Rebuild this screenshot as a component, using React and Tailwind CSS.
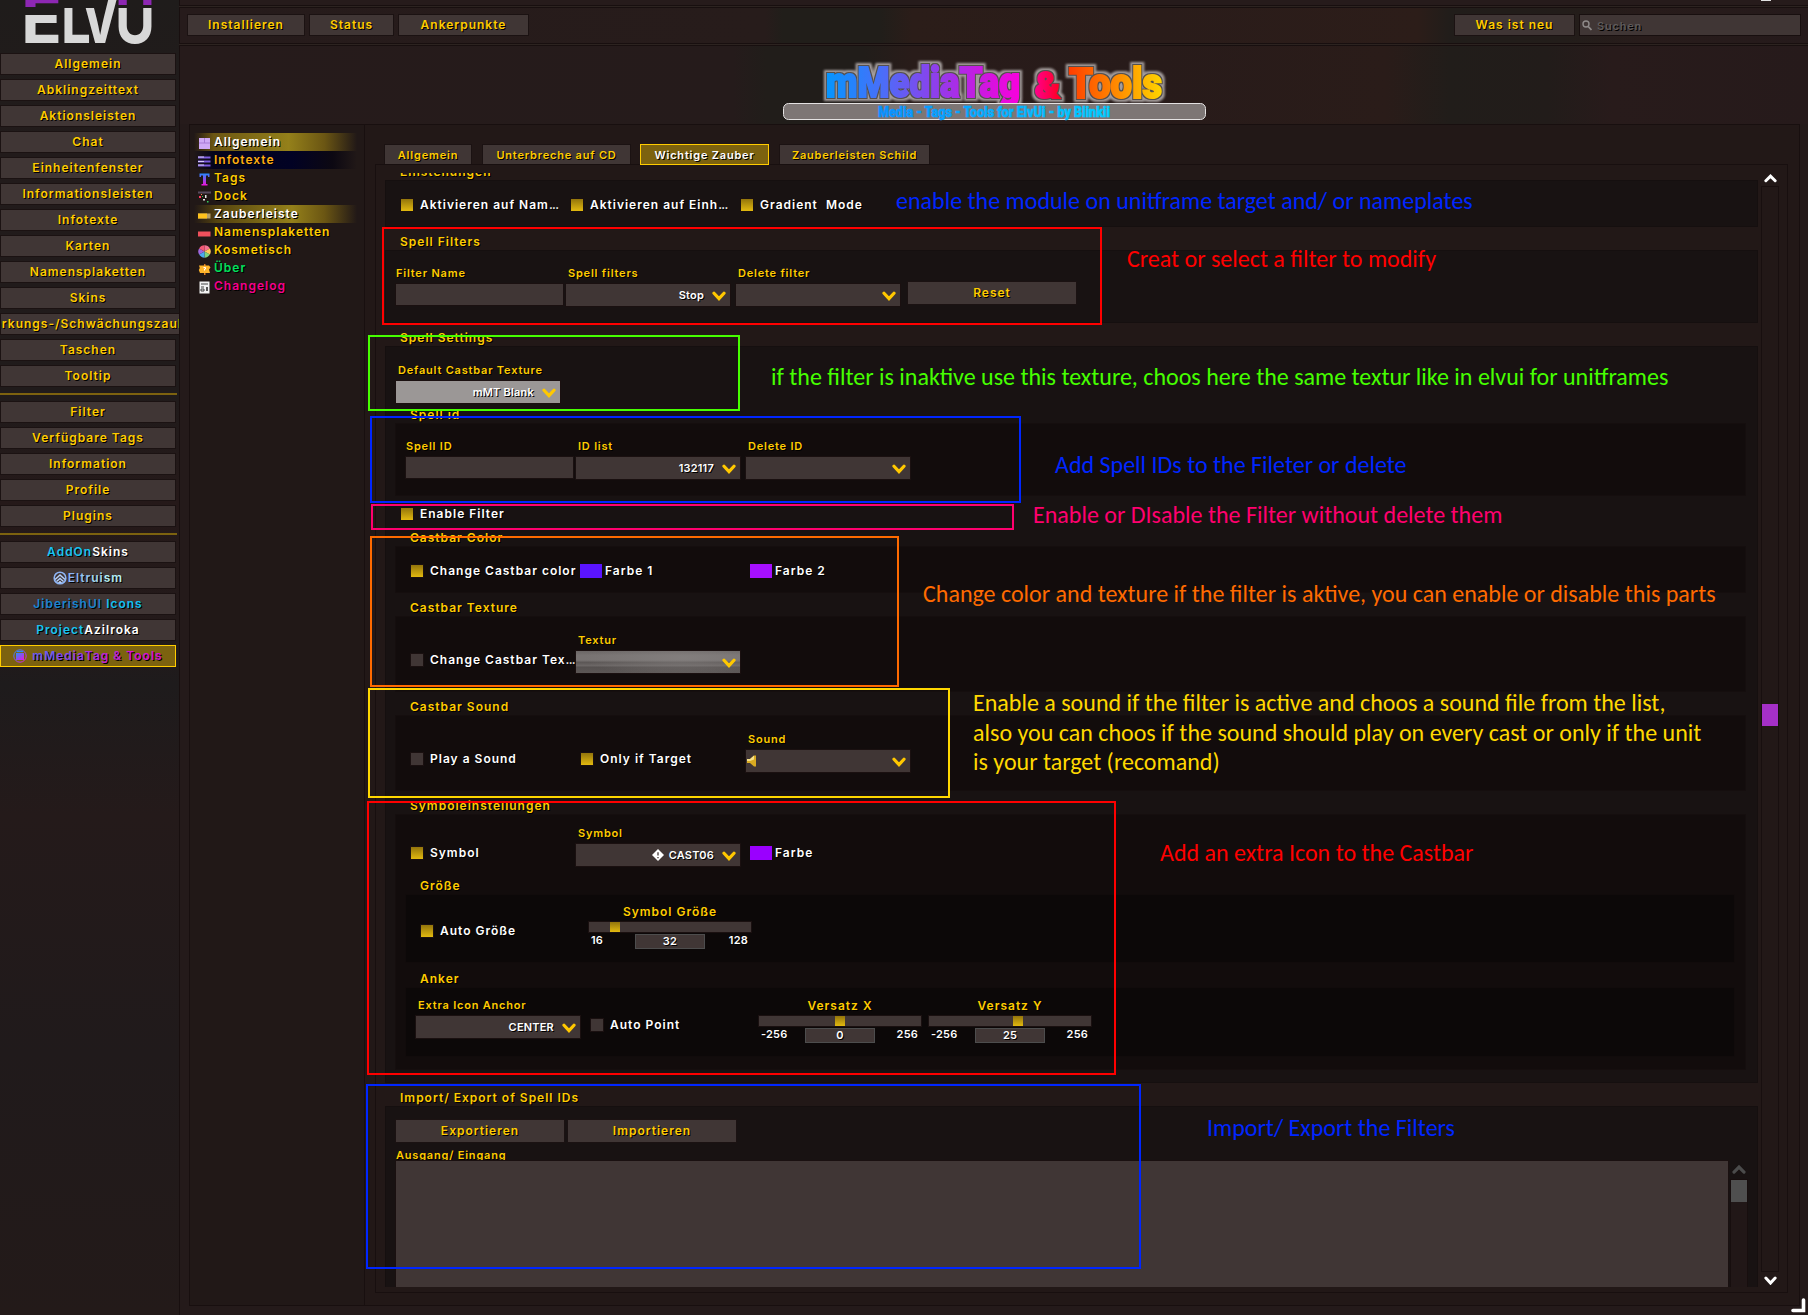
import React from "react";

const UI = "font-['Inter',sans-serif] font-semibold text-[12px] leading-[14px] tracking-[1px] [text-shadow:1px_1px_0_#000] whitespace-pre";
const UI_SMALL = "font-['Inter',sans-serif] font-semibold text-[11px] leading-[14px] tracking-[0.8px] [text-shadow:1px_1px_0_#000] whitespace-pre";
const UI_VALUE = "font-['Inter',sans-serif] font-semibold text-[11px] leading-[14px] tracking-[0.2px] [text-shadow:1px_1px_0_#000] whitespace-pre";

function Chevron({ up, className = "", w = 14 }) {
  return (
    <svg width={w} height={w * 0.72} viewBox="0 0 14 10" fill="none" stroke="currentColor" strokeWidth="3.2" strokeLinecap="round" className={className}>
      {up ? <path d="M2 8 7 3l5 5" /> : <path d="M2 2.2 7 7.6l5-5.4" />}
    </svg>
  );
}

function Button({ children, className = "", text = UI }) {
  return (
    <div className={`${text} flex shrink-0 items-center justify-center overflow-hidden border border-[#1b1212] bg-[#403635] text-[#ffcc00] ${className}`}>
      {children}
    </div>
  );
}

function Separator() {
  return <div className="mt-[2px] mb-[2px] h-[2px] w-[177px] shrink-0 bg-[#7c620f]" />;
}

const mainNav = ["Allgemein", "Abklingzeittext", "Aktionsleisten", "Chat", "Einheitenfenster", "Informationsleisten", "Infotexte", "Karten", "Namensplaketten", "Skins", "Stärkungs-/Schwächungszauber", "Taschen", "Tooltip"];
const toolNav = ["Filter", "Verfügbare Tags", "Information", "Profile", "Plugins"];

function Logo() {
  return (
    <svg width="179" height="53" viewBox="0 0 179 53" className="shrink-0" fontFamily="Inter, sans-serif" fontWeight="700" fontSize="66">
      <defs>
        <linearGradient id="lg" gradientUnits="userSpaceOnUse" x1="0" y1="0" x2="0" y2="50">
          <stop offset="0" stopColor="#8d27b3" /><stop offset="0.09" stopColor="#8d27b3" />
          <stop offset="0.09" stopColor="#8d27b3" stopOpacity="0" /><stop offset="0.16" stopColor="#d8d8d8" stopOpacity="0" />
          <stop offset="0.16" stopColor="#d8d8d8" /><stop offset="1" stopColor="#d8d8d8" />
        </linearGradient>
        <linearGradient id="le" gradientUnits="userSpaceOnUse" x1="0" y1="0" x2="0" y2="50">
          <stop offset="0" stopColor="#8d27b3" /><stop offset="0.14" stopColor="#8d27b3" />
          <stop offset="0.14" stopColor="#8d27b3" stopOpacity="0" /><stop offset="0.3" stopColor="#d8d8d8" stopOpacity="0" />
          <stop offset="0.3" stopColor="#d8d8d8" /><stop offset="1" stopColor="#d8d8d8" />
        </linearGradient>
        <clipPath id="cl"><rect x="0" y="8" width="99" height="45" /><rect x="99" y="0" width="30" height="53" /></clipPath>
      </defs>
      <text x="21" y="43" textLength="41" lengthAdjust="spacingAndGlyphs" fill="url(#le)">E</text>
      <g clipPath="url(#cl)" fill="#d8d8d8">
        <text x="61" y="43" textLength="30" lengthAdjust="spacingAndGlyphs">L</text>
        <text x="81" y="43" textLength="38" lengthAdjust="spacingAndGlyphs">V</text>
      </g>
      <text x="115" y="43" textLength="40" lengthAdjust="spacingAndGlyphs" fill="url(#lg)">U</text>
    </svg>
  );
}

function Sidebar() {
  return (
    <aside className="flex w-[179px] shrink-0 flex-col overflow-hidden bg-[linear-gradient(180deg,#1f1c1b_0%,#221b1b_12%,#201b1b_30%,#251919_38%,#231a1a_48%,#1e1b1c_52%,#241a1a_62%,#201a1b_80%,#231a19_100%)]">
      <Logo />
      <nav className="flex flex-col gap-1">
        {mainNav.map((n, i) => (
          <Button key={n} className={i === 10 ? "h-[22px] w-[179px] border-r-0" : "h-[22px] w-[176px]"}>{n}</Button>
        ))}
        <Separator />
        {toolNav.map((n) => <Button key={n} className="h-[22px] w-[176px]">{n}</Button>)}
        <Separator />
        <Button className="h-[22px] w-[176px]"><span className="text-[#16c3f2]">AddOn</span><span className="text-white">Skins</span></Button>
        <Button className="h-[22px] w-[176px]">
          <svg width="14" height="14" viewBox="0 0 14 14" className="mr-[1px]" fill="none">
            <circle cx="7" cy="7" r="5.8" stroke="#8db4f4" strokeWidth="1.6" />
            <path d="M2 8.5 7 4l5 4.500M3.500 10.500 7 7.500l3.500 3M5.500 12 7 10.700 8.500 12" stroke="#b5d0fa" strokeWidth="1.500" />
          </svg>
          <span className="text-[#8bb4f5]">El</span><span className="text-[#95c6f5]">tr</span><span className="text-[#a5dcf5]">ui</span><span className="text-[#b4eef5]">sm</span>
        </Button>
        <Button className="h-[22px] w-[176px]"><span className="text-[#1784d1]">JiberishUI</span><span className="text-[#10c0f5]"> Icons</span></Button>
        <Button className="h-[22px] w-[176px]"><span className="text-[#16c3f2]">Project</span><span className="text-white">Azilroka</span></Button>
        <div className={`${UI} flex h-[22px] w-[176px] items-center justify-center border border-[#ffcc00] bg-[#7c620f]`}>
          <svg width="14" height="14" viewBox="0 0 14 14" className="mr-[5px]">
            <defs><linearGradient id="mi" x1="0" y1="0" x2="1" y2="1"><stop offset="0" stopColor="#2b8cff" /><stop offset="1" stopColor="#e815e0" /></linearGradient></defs>
            <circle cx="7" cy="7" r="6.2" fill="none" stroke="url(#mi)" />
            <path d="M3 4h8v7H3z" fill="url(#mi)" /><path d="M4 2.500h6" stroke="#2b8cff" strokeWidth="1.300" />
          </svg>
          <span className="text-[#6a5af0]">mM</span><span className="text-[#8048ee]">ed</span><span className="text-[#943ee8]">ia</span><span className="text-[#ac2fe0]">Ta</span><span className="text-[#c024d8]">g &amp;</span><span className="text-[#d412d4]"> Tools</span>
        </div>
      </nav>
    </aside>
  );
}

function Banner() {
  return (
    <svg width="440" height="78" viewBox="775 46 440 78" className="ml-[595px] block" fontFamily="Roboto, sans-serif" fontWeight="900">
      <defs>
        <linearGradient id="b1" gradientUnits="userSpaceOnUse" x1="826" y1="0" x2="1021" y2="0">
          <stop offset="0" stopColor="#0496ff" /><stop offset="0.3" stopColor="#4d6cf8" /><stop offset="0.6" stopColor="#9838ea" /><stop offset="0.8" stopColor="#cc18e0" /><stop offset="1" stopColor="#fa00dc" />
        </linearGradient>
        <linearGradient id="b2" gradientUnits="userSpaceOnUse" x1="1034" y1="0" x2="1060" y2="0"><stop offset="0" stopColor="#ff0090" /><stop offset="1" stopColor="#ff0020" /></linearGradient>
        <linearGradient id="b3" gradientUnits="userSpaceOnUse" x1="1068" y1="0" x2="1162" y2="0"><stop offset="0" stopColor="#ff3c00" /><stop offset="0.5" stopColor="#ff8800" /><stop offset="1" stopColor="#ffd400" /></linearGradient>
        <linearGradient id="b4" gradientUnits="userSpaceOnUse" x1="878" y1="0" x2="1110" y2="0"><stop offset="0" stopColor="#0a90ff" /><stop offset="1" stopColor="#00ccff" /></linearGradient>
        <filter id="glow" x="-5%" y="-30%" width="110%" height="160%" colorInterpolationFilters="sRGB">
          <feMorphology in="SourceAlpha" operator="dilate" radius="3" result="wide" />
          <feGaussianBlur in="wide" stdDeviation="1.2" result="soft" />
          <feFlood floodColor="#a39c9b" result="halo" />
          <feComposite in="halo" in2="soft" operator="in" result="haloed" />
          <feMorphology in="SourceAlpha" operator="dilate" radius="0.8" result="edge" />
          <feFlood floodColor="#55504f" result="dark" />
          <feComposite in="dark" in2="edge" operator="in" result="edged" />
          <feMerge><feMergeNode in="haloed" /><feMergeNode in="edged" /><feMergeNode in="SourceGraphic" /></feMerge>
        </filter>
      </defs>
      <g fontSize="43" strokeWidth="2" strokeLinejoin="miter" filter="url(#glow)">
        <text x="826" y="97" textLength="194" lengthAdjust="spacingAndGlyphs" fill="url(#b1)" stroke="url(#b1)">mMediaTag</text>
        <text x="1035" y="98" textLength="25" lengthAdjust="spacingAndGlyphs" fontSize="36" fill="url(#b2)" stroke="url(#b2)">&amp;</text>
        <text x="1069" y="98" textLength="93" lengthAdjust="spacingAndGlyphs" fill="url(#b3)" stroke="url(#b3)">Tools</text>
      </g>
      <rect x="783.500" y="103.500" width="422" height="16" rx="5" fill="#7d7675" stroke="#e4e2e2" />
      <text x="878" y="116.500" fontSize="15" textLength="232" lengthAdjust="spacingAndGlyphs" fill="url(#b4)" stroke="url(#b4)" strokeWidth="0.600">Media - Tags - Tools for ElvUi - by Blinkii</text>
    </svg>
  );
}

function TreeIcon({ kind }) {
  const box = "mr-[3px] mt-[4px] h-[13px] w-[13px] shrink-0";
  switch (kind) {
    case "grid":
      return <svg className={box} viewBox="0 0 13 13"><path d="M1 1h11v11H1z" fill="#cfa9f6" /><path d="M1 6h11M6.500 1v5" stroke="#a77ad6" /></svg>;
    case "lines":
      return <svg className={box} viewBox="0 0 13 13"><path d="M0 2.500h12.500M0 6.500h12.500M0 10.500h12.500" stroke="#7d5ce0" strokeWidth="2" /><path d="M0 2h6M0 6.500h6M0 10h6" stroke="#d9cdfa" /></svg>;
    case "tag":
      return <svg className={box} viewBox="0 0 13 13"><defs><linearGradient id="tg" x1="0" y1="0" x2="0" y2="1"><stop offset="0" stopColor="#2588ff" /><stop offset="1" stopColor="#f012d8" /></linearGradient></defs><path d="M1.500.5h10v3.500H10V2.500H8V11h1.500v1.500h-6V11H5V2.500H3V4H1.500z" fill="url(#tg)" /></svg>;
    case "dock":
      return <svg className={box} viewBox="0 0 13 13"><path d="M0 .5h13v2H0z" fill="#574a5e" /><path d="M1 5h2v2H1z" fill="#ff3a60" /><path d="M3 3h1v1H3z" fill="#ff8844" /><path d="M7 4h1.500v3H7zM5 8h2v1.500H5z" fill="#e8e8e8" /><path d="M9 10h1.500v1.500H9zM4 5h1v1H4z" fill="#35d15b" /></svg>;
    case "cast":
      return <svg className={box} viewBox="0 0 13 13"><path d="M0 4.500h12.500v5H0z" fill="#b49f6a" /><path d="M0 4.500h9v5H0z" fill="#ffc21c" /></svg>;
    case "plate":
      return <svg className={box} viewBox="0 0 13 13"><path d="M0 4.500h12.500v5H0z" fill="#f0505c" /></svg>;
    case "wheel":
      return (
        <svg className={box} viewBox="-6.500 -6.500 13 13">
          <path d="M0 0V-6.200A6.200 6.200 0 0 1 5.400-3.100Z" fill="#f2728f" /><path d="M0 0 5.400-3.100A6.200 6.200 0 0 1 5.400 3.100Z" fill="#ffc95c" />
          <path d="M0 0 5.400 3.100A6.200 6.200 0 0 1 0 6.200Z" fill="#7ed37c" /><path d="M0 0V6.200A6.200 6.200 0 0 1-5.400 3.100Z" fill="#4aa8f0" />
          <path d="M0 0-5.400 3.100A6.200 6.200 0 0 1-5.400-3.100Z" fill="#a067dd" /><path d="M0 0-5.400-3.100A6.200 6.200 0 0 1 0-6.200Z" fill="#f05a76" />
        </svg>
      );
    case "sign":
      return <svg className={box} viewBox="0 0 13 13"><path d="M6 1h1.500v11H6z" fill="#e07b22" /><path d="M1 2.500h10l1.500 2-1.500 2L12 10H2L.8 7l1-2z" fill="#ffb52b" /><path d="M5.500 4.500h2v1.500h-1v1.500" stroke="#fff" fill="none" /></svg>;
    default:
      return <svg className={box} viewBox="0 0 13 13"><path d="M1.500.5h10v12h-10z" fill="#f2f2f2" /><path d="M3 3h7M3 6h3M3 8h3v2H3z" stroke="#444" fill="none" /><path d="M8 6h2v4H8z" fill="#555" /></svg>;
  }
}

const tree = [
  ["grid", "Allgemein", "text-white bg-[linear-gradient(90deg,transparent,#6b5613_12%,#94801a_58%,#6b5613_80%,transparent)]"],
  ["lines", "Infotexte", "text-[#ffae12] bg-[linear-gradient(90deg,transparent,#03031c_12%,#020224_60%,#0c0812_85%,transparent)]"],
  ["tag", "Tags", "text-[#ffcc00]"],
  ["dock", "Dock", "text-[#ffcc00]"],
  ["cast", "Zauberleiste", "text-white bg-[linear-gradient(90deg,transparent,#55430f_14%,#94801a_60%,#6b5613_80%,transparent)]"],
  ["plate", "Namensplaketten", "text-[#ffcc00]"],
  ["wheel", "Kosmetisch", "text-[#ffcc00]"],
  ["sign", "Über", "text-[#00e05c]"],
  ["log", "Changelog", "text-[#f5008c]"],
];

function Heading({ children, className = "" }) {
  return <div className={`${UI} h-[23px] shrink-0 pt-[8px] pl-[15px] text-[#ffcc00] ${className}`}>{children}</div>;
}

function Label({ children, className = "" }) {
  return <div className={`${UI_SMALL} text-[#ffcc00] ${className}`}>{children}</div>;
}

function Cell({ children, className = "" }) {
  return <div className={`w-[170px] shrink-0 ${className}`}>{children}</div>;
}

function Check({ on, cut, children, className = "" }) {
  return (
    <Cell className={className}>
      <div className="flex h-[14px] items-center pl-[4px]">
        <span className={on ? "h-[14px] w-[14px] shrink-0 border border-[#1a1010] bg-[linear-gradient(180deg,#93750c,#e2b90f)]" : "h-[14px] w-[14px] shrink-0 border border-[#1a1010] bg-[#403635]"} />
        <span className={`${UI} ml-[6px] text-white`}>{children}{cut && <span className="tracking-[-0.7px]">...</span>}</span>
      </div>
    </Cell>
  );
}

function Swatch({ color, children, className = "" }) {
  return (
    <Cell className={className}>
      <div className="flex h-[14px] items-center pl-[4px]">
        <span className={`h-[14px] w-[22px] ${color}`} />
        <span className={`${UI} ml-[3px] text-white`}>{children}</span>
      </div>
    </Cell>
  );
}

function Select({ label, value, icon, fill = "bg-[#403635]", className = "", left }) {
  return (
    <Cell className={className}>
      <Label className="-mt-px mb-[4px] pl-[2px]">{label}</Label>
      <div className={`flex h-[22px] w-[164px] items-center pr-[4px] outline outline-1 outline-[#1a1010] ${fill}`}>
        {left}
        <div className="ml-auto flex items-center">
          {icon}
          <span className={`${UI_VALUE} mr-[8px] text-white`}>{value}</span>
          <Chevron className="mt-[2px] text-[#ffc800]" />
        </div>
      </div>
    </Cell>
  );
}

function Input({ label, className = "" }) {
  return (
    <Cell className={className}>
      <Label className="-mt-px mb-[4px]">{label}</Label>
      <div className="h-[21px] w-[167px] bg-[#403635] outline outline-1 outline-[#1a1010]" />
    </Cell>
  );
}

function Slider({ label, min, max, value, pos, className = "" }) {
  return (
    <Cell className={className}>
      <div className="ml-[3px] w-[162px]">
        <div className={`${UI} text-center text-[#ffcc00]`}>{label}</div>
        <div className="mt-[3px] h-[10px] bg-[#403635] outline outline-1 outline-[#1a1010]">
          <div className="h-[10px] w-[10px] bg-[linear-gradient(180deg,#93750c,#e2b90f)]" style={{ marginLeft: pos }} />
        </div>
        <div className={`${UI_VALUE} mt-[1px] flex justify-between text-white`}>
          <span className="w-[45px] pl-[2px]">{min}</span>
          <span className="mt-px h-[15px] w-[70px] border border-[#4d4d4d] bg-[#403635] text-center leading-[13px]">{value}</span>
          <span className="w-[45px] pr-[3px] text-right">{max}</span>
        </div>
      </div>
    </Cell>
  );
}

function Box({ children, className = "" }) {
  return <div className={`shrink-0 border ${className}`}>{children}</div>;
}

function Settings() {
  const l1 = "border-[#150f0f] bg-[#181212]";
  const l2 = "border-[#150e0e] bg-[#120c0c] ml-[9px] mr-[11px]";
  const l3 = "border-[#110b0b] bg-[#0c0808] ml-[9px] mr-[10px]";
  const row = "flex pl-[10px]";
  return (
    <div className="flex h-[1114px] w-[1373px] flex-col overflow-hidden">
      <Heading className="-mt-[16px]">Einstellungen</Heading>
      <Box className={`${l1} h-[47px]`}>
        <div className={row}>
          <Check on cut className="mt-[17px]">Aktivieren auf Nam</Check>
          <Check on cut className="mt-[17px]">Aktivieren auf Einh</Check>
          <Check on className="mt-[17px]">Gradient  Mode</Check>
        </div>
      </Box>
      <Heading>Spell Filters</Heading>
      <Box className={`${l1} h-[73px]`}>
        <div className={row}>
          <Input label="Filter Name" className="mt-[16px]" />
          <Select label="Spell filters" value="Stop" className="mt-[16px]" />
          <Select label="Delete filter" value="" className="mt-[16px]" />
          <Button className="mt-[30px] ml-[1px] h-[24px] w-[170px]">Reset</Button>
        </div>
      </Box>
      <Heading>Spell Settings</Heading>
      <Box className={`${l1} h-[737px]`}>
        <div className={`${row} h-[53px]`}>
          <Select label="Default Castbar Texture" value="mMT Blank" fill="bg-[#9b9796]" className="mt-[17px]" />
        </div>
        <Heading className="ml-[9px]">Spell id</Heading>
        <Box className={`${l2} h-[73px]`}>
          <div className={row}>
            <Input label="Spell ID" className="mt-[16px]" />
            <Select label="ID list" value="132117" className="mt-[16px]" />
            <Select label="Delete ID" value="" className="mt-[16px]" />
          </div>
        </Box>
        <div className={`${row} h-[27px]`}>
          <Check on className="mt-[11px]">Enable Filter</Check>
        </div>
        <Heading className="ml-[9px]">Castbar Color</Heading>
        <Box className={`${l2} h-[47px]`}>
          <div className={row}>
            <Check on className="mt-[17px]">Change Castbar color</Check>
            <Swatch color="bg-[#5a14ff]" className="mt-[17px]">Farbe 1</Swatch>
            <Swatch color="bg-[#a60fff]" className="mt-[17px]">Farbe 2</Swatch>
          </div>
        </Box>
        <Heading className="ml-[9px]">Castbar Texture</Heading>
        <Box className={`${l2} h-[76px]`}>
          <div className={row}>
            <Check cut className="mt-[36px]">Change Castbar Tex</Check>
            <Select label="Textur" value="" className="mt-[17px]" fill="bg-[radial-gradient(60%_90%_at_65%_30%,#8d898880,transparent),linear-gradient(180deg,#6b6665_0%,#787372_20%,#787372_42%,#5c5756_52%,#6b6665_66%,#565150_74%,#5c5756_100%)]" />
          </div>
        </Box>
        <Heading className="ml-[9px]">Castbar Sound</Heading>
        <Box className={`${l2} h-[76px]`}>
          <div className={row}>
            <Check className="mt-[36px]">Play a Sound</Check>
            <Check on className="mt-[36px]">Only if Target</Check>
            <Select
              label="Sound"
              value=""
              className="mt-[17px]"
              left={<svg width="10" height="12" viewBox="0 0 10 12" className="ml-[1px]"><path d="M0 4h3l4-3.500h2v11H7L3 8H0z" fill="#d9ab22" /><path d="M0 4h3l4-3.500v4L3 6H0z" fill="#f7e28a" /></svg>}
            />
          </div>
        </Box>
        <Heading className="ml-[9px]">Symboleinstellungen</Heading>
        <Box className={`${l2} h-[256px]`}>
          <div className={`${row} h-[56px]`}>
            <Check on className="mt-[31px]">Symbol</Check>
            <Select
              label="Symbol"
              value="CAST06"
              className="mt-[12px]"
              icon={<svg width="12" height="12" viewBox="0 0 12 12" className="mr-[5px]"><path d="M6 0l6 6-6 6-6-6z" fill="#fff" /><path d="M6 3.200v3.300M6 8v1.200" stroke="#403635" strokeWidth="1.300" /></svg>}
            />
            <Swatch color="bg-[#9a00ff]" className="mt-[31px]">Farbe</Swatch>
          </div>
          <Heading className="ml-[9px]">Größe</Heading>
          <Box className={`${l3} h-[69px]`}>
            <div className={row}>
              <Check on className="mt-[29px]">Auto Größe</Check>
              <Slider label="Symbol Größe" min="16" max="128" value="32" pos={21} className="mt-[10px]" />
            </div>
          </Box>
          <Heading className="mt-[1px] ml-[9px]">Anker</Heading>
          <Box className={`${l3} h-[70px]`}>
            <div className={row}>
              <Select label="Extra Icon Anchor" value="CENTER" className="mt-[11px]" />
              <Check className="mt-[30px]">Auto Point</Check>
              <Slider label="Versatz X" min="-256" max="256" value="0" pos={76} className="mt-[11px]" />
              <Slider label="Versatz Y" min="-256" max="256" value="25" pos={84} className="mt-[11px]" />
            </div>
          </Box>
        </Box>
      </Box>
      <Heading>Import/ Export of Spell IDs</Heading>
      <Box className={`${l1} h-[190px]`}>
        <div className="mt-[12px] ml-[9px] flex gap-[2px]">
          <Button className="h-[24px] w-[170px]">Exportieren</Button>
          <Button className="h-[24px] w-[170px]">Importieren</Button>
        </div>
        <Label className="mt-[5px] ml-[10px] h-[13px] overflow-hidden">Ausgang/ Eingang</Label>
        <div className="flex pl-[10px]">
          <div className="h-[130px] w-[1332px] bg-[#403635] outline outline-1 outline-[#1a1010]" />
          <div className="ml-[2px] flex w-[18px] flex-col items-center">
            <Chevron up className="mt-[3px] text-[#4b4b4b]" />
            <div className="mt-[5px] h-[120px] w-[18px] border border-[#170e0e] bg-[#211717]">
              <div className="h-[22px] bg-[#4f4f4f]" />
            </div>
          </div>
        </div>
      </Box>
    </div>
  );
}

const frames = [
  "left-[382px] top-[227px] w-[720px] h-[98px] border-[#ff0000]",
  "left-[368px] top-[335px] w-[372px] h-[76px] border-[#46ff00]",
  "left-[370px] top-[416px] w-[651px] h-[87px] border-[#0026ff]",
  "left-[371px] top-[504px] w-[643px] h-[26px] border-[#ff006e]",
  "left-[370px] top-[536px] w-[529px] h-[151px] border-[#ff6a00]",
  "left-[368px] top-[688px] w-[582px] h-[110px] border-[#ffd800]",
  "left-[367px] top-[801px] w-[749px] h-[274px] border-[#ff0000]",
  "left-[366px] top-[1084px] w-[775px] h-[185px] border-[#0026ff]",
];

const notes = [
  ["left-[896px] top-[186px] text-[#0026ff]", "enable the module on unitframe target and/ or nameplates"],
  ["left-[1127px] top-[244px] text-[#ff0000]", "Creat or select a filter to modify"],
  ["left-[771px] top-[362px] text-[#46ff00]", "if the filter is inaktive use this texture, choos here the same textur like in elvui for unitframes"],
  ["left-[1055px] top-[450px] text-[#0026ff]", "Add Spell IDs to the Fileter or delete"],
  ["left-[1033px] top-[500px] text-[#ff006e]", "Enable or DIsable the Filter without delete them"],
  ["left-[923px] top-[579px] text-[#ff6a00]", "Change color and texture if the filter is aktive, you can enable or disable this parts"],
  ["left-[973px] top-[688px] text-[#ffd800]", "Enable a sound if the filter is active and choos a sound file from the list,\nalso you can choos if the sound should play on every cast or only if the unit\nis your target (recomand)"],
  ["left-[1160px] top-[838px] text-[#ff0000]", "Add an extra Icon to the Castbar"],
  ["left-[1207px] top-[1113px] text-[#0026ff]", "Import/ Export the Filters"],
];

export default function App() {
  return (
    <div className="relative flex h-[1315px] w-[1808px] overflow-hidden bg-[#231a1a]">
      <Sidebar />
      <main className="flex min-w-0 flex-1 flex-col bg-[#2c2320]">
        <div className="flex h-[6px] justify-end border-b border-l border-[#180f0f] bg-[#261b1b] pr-[37px]">
          <span className="h-[1px] w-[10px] bg-[#e0e0e0]" />
        </div>
        <div className="mt-[1px] flex h-[37px] shrink-0 gap-[4px] border-y border-l border-[#180f0f] bg-[linear-gradient(90deg,#261b1b_0%,#271c1b_36%,#211e1a_37%,#211e1a_43%,#2b1d19_45%,#2a1c1a_60%,#2c1d19_76%,#211d1a_78%,#231d1a_85%,#281c1b_90%,#251a1b_100%)] pt-[6px] pl-[7px]">
          <Button className="h-[22px] w-[118px]">Installieren</Button>
          <Button className="h-[22px] w-[85px]">Status</Button>
          <Button className="h-[22px] w-[131px]">Ankerpunkte</Button>
          <Button className="mr-0 ml-auto h-[22px] w-[121px]">Was ist neu</Button>
          <div className="mr-[7px] flex h-[22px] w-[222px] items-center border border-[#180f0f] bg-[#403635] pl-[2px]">
            <svg width="10" height="11" viewBox="0 0 10 11" fill="none" stroke="#8f8b8a" strokeWidth="1.400"><circle cx="4" cy="4" r="3" /><path d="M6.200 6.500 9.500 10" strokeWidth="1.800" /></svg>
            <span className={`${UI_SMALL} mt-[2px] ml-[5px] text-[#5f5b5b]`}>Suchen</span>
          </div>
        </div>
        <div className="mt-[1px] flex min-h-0 flex-1 flex-col border-t border-l border-[#180f0f] bg-[#241a1a]">
          <header className="h-[78px] shrink-0 bg-[linear-gradient(90deg,#261b1b_0%,#251b1b_34%,#211d1a_36%,#211d1a_42%,#291c1a_45%,#281b1a_60%,#2a1c19_74%,#211d1a_78%,#221c1a_84%,#281b1b_88%,#261a1b_100%)]">
            <Banner />
          </header>
          <div className="flex pl-[9px]">
            <div className="h-[1182px] w-[175px] border border-r-0 border-[#180f0f] bg-[#211817] pt-[8px] pl-[4px]">
              {tree.map(([kind, name, cls]) => (
                <div key={name} className={`${UI} flex h-[18px] w-[163px] pl-[4px] ${cls}`}>
                  <TreeIcon kind={kind} />
                  <span className="pt-[2px]">{name}</span>
                </div>
              ))}
            </div>
            <div className="h-[1182px] w-[1436px] border border-[#180f0f] bg-[#221817] pl-[10px]">
              <div className="flex h-[39px] items-end pl-[9px]">
                <Button text={UI_SMALL} className="h-[20px] w-[88px] border-b-0">Allgemein</Button>
                <Button text={UI_SMALL} className="ml-[10px] h-[20px] w-[149px] border-b-0">Unterbreche auf CD</Button>
                <div className={`${UI_SMALL} relative top-[1px] ml-[9px] flex h-[21px] w-[129px] items-center justify-center border border-[#ffcc00] bg-[#7c620f] text-white`}>Wichtige Zauber</div>
                <Button text={UI_SMALL} className="ml-[10px] h-[20px] w-[151px] border-b-0">Zauberleisten Schild</Button>
              </div>
              <div className="flex h-[1129px] w-[1413px] border border-[#180f0f] pt-[8px] pl-[9px]">
                <Settings />
                <div className="ml-[3px] flex w-[18px] flex-col items-center text-white">
                  <Chevron up w={13} className="h-[10px] shrink-0" />
                  <div className="mt-[3px] h-[1086px] w-[18px] shrink-0 border border-[#180f0f] pt-[517px]">
                    <div className="h-[22px] bg-[#a630c8]" />
                  </div>
                  <Chevron w={13} className="mt-[4px] shrink-0" />
                </div>
              </div>
            </div>
          </div>
        </div>
      </main>
      {frames.map((f) => <div key={f} className={`absolute border-2 ${f}`} />)}
      {notes.map(([cls, text]) => (
        <p key={text} className={`absolute font-['Carlito','Lato',sans-serif] text-[24px] leading-[29.500px] whitespace-pre ${cls}`}>{text}</p>
      ))}
      <svg width="15" height="15" viewBox="0 0 15 15" className="absolute right-[2px] bottom-[2px]" stroke="#fff" strokeWidth="3.600" fill="none" strokeLinecap="round"><path d="M2 12.500h10.500V2" /></svg>
    </div>
  );
}
